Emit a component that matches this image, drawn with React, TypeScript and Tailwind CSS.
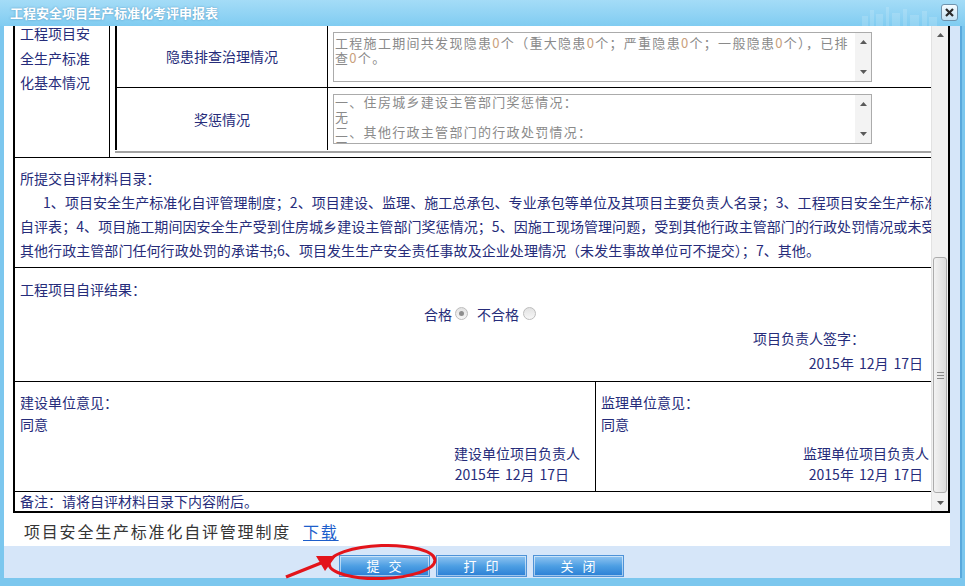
import React from 'react';

const Tri = ({ up }: { up?: boolean }) => (
  <svg width="7" height="4" viewBox="0 0 7 4">
    {up ? <path d="M0 4 L3.5 0 L7 4 Z" fill="#5a5a5a" /> : <path d="M0 0 L7 0 L3.5 4 Z" fill="#5a5a5a" />}
  </svg>
);

function Radio({ checked }: { checked?: boolean }) {
  return (
    <span className="w-[13px] h-[13px] rounded-full border border-[#bdbdbd] bg-gradient-to-b from-[#e2e2e2] to-[#f7f7f7] flex items-center justify-center">
      {checked && <span className="w-[5px] h-[5px] rounded-full bg-[#8e8e8e]" />}
    </span>
  );
}

function ReadBox({ children, top }: { children: React.ReactNode; top: string }) {
  return (
    <div className="w-[539px] h-[50px] border border-[#ababab] bg-white flex">
      <div className={`w-[521px] overflow-hidden whitespace-nowrap pl-[1px] ${top} text-[13px] tracking-[1.3px] leading-[15px] text-[#8a8a8a]`}>
        {children}
      </div>
      <div className="w-[16px] bg-[#f3f3f3] flex flex-col items-center justify-between py-[7px]">
        <Tri up />
        <Tri />
      </div>
    </div>
  );
}

const Zero = () => <span className="text-[#c9a07c]">0</span>;

const DateText = () => (
  <>
    2015年<span className="ml-[5px]">12月</span><span className="ml-[5px]">17日</span>
  </>
);

export default function App() {
  return (
    <div className="w-[965px] h-[586px] flex flex-col bg-[#7cc7ee] overflow-hidden font-['Noto_Sans_CJK_SC',sans-serif]">
      {/* title bar */}
      <div className="h-[26px] relative flex items-center bg-gradient-to-b from-[#a4dcf7] to-[#80ccf1]">
        <span className="pl-[10px] text-[13px] font-bold text-white [text-shadow:0_0_2px_rgba(30,90,140,0.5)]">工程安全项目生产标准化考评申报表</span>
        <svg className="absolute left-[862px] top-[4px]" width="75" height="22" viewBox="0 0 75 22">
          <g fill="#ffffff" opacity="0.15">
            <rect x="0" y="12" width="6" height="10" />
            <rect x="8" y="6" width="4" height="16" />
            <rect x="14" y="10" width="7" height="12" />
            <rect x="24" y="3" width="3" height="19" />
            <rect x="30" y="9" width="8" height="13" />
            <rect x="41" y="5" width="4" height="17" />
            <rect x="48" y="11" width="9" height="11" />
            <rect x="60" y="7" width="5" height="15" />
            <rect x="67" y="13" width="8" height="9" />
          </g>
        </svg>
        <button className="absolute left-[941px] top-[4px] w-[17px] h-[17px] rounded-[3px] border border-[#6f93ad] bg-gradient-to-b from-[#f4fbff] to-[#c4e2f4] flex items-center justify-center">
          <svg width="9" height="9" viewBox="0 0 9 9">
            <path d="M1 1 L8 8 M8 1 L1 8" stroke="#2a2a2a" strokeWidth="2.2" />
          </svg>
        </button>
      </div>

      <div className="h-[552px] flex">
        <div className="w-[4px]" />
        <div className="w-[954px] flex flex-col bg-[#d6e6f9]">
          {/* white area */}
          <div className="w-[946px] h-[520px] bg-white flex flex-col">
            <div className="ml-[9px] w-[937px] h-[487px] border-l-2 border-r-2 border-b-2 border-black flex">
              {/* scrolled content */}
              <div className="w-[916px] h-[485px] overflow-hidden">
                <div className="w-[930px] text-[14px] text-[#262c7a]">
                  {/* row 1 */}
                  <div className="h-[132px] border-b border-black flex">
                    <div className="w-[95px] border-r border-black pl-[5px]">
                      <div className="-mt-[5px] leading-[24.5px]">
                        <div>工程项目安</div>
                        <div>全生产标准</div>
                        <div>化基本情况</div>
                      </div>
                    </div>
                    <div className="flex-1 pl-[5px] flex flex-col">
                      <div className="border-l-2 border-black flex flex-col">
                        <div className="h-[62px] border-b border-black flex">
                          <div className="w-[211px] border-r border-black flex items-center justify-center">隐患排查治理情况</div>
                          <div className="pl-[5px] flex items-center">
                            <ReadBox top="pt-[2px]">
                              <div>工程施工期间共发现隐患<Zero />个（重大隐患<Zero />个；严重隐患<Zero />个；一般隐患<Zero />个），已排</div>
                              <div>查<Zero />个。</div>
                            </ReadBox>
                          </div>
                        </div>
                        <div className="h-[62px] flex">
                          <div className="w-[211px] border-r border-black flex items-center justify-center">奖惩情况</div>
                          <div className="pl-[5px] flex items-center">
                            <ReadBox top="-mt-[1px]">
                              <div>一、住房城乡建设主管部门奖惩情况：</div>
                              <div>无</div>
                              <div>二、其他行政主管部门的行政处罚情况：</div>
                              <div>无</div>
                            </ReadBox>
                          </div>
                        </div>
                      </div>
                      <div className="mt-[1px] h-[2px] bg-[#a3a3a3]" />
                    </div>
                  </div>

                  {/* row 2 */}
                  <div className="h-[110px] border-b border-black pt-[8px] pl-[5px] leading-[24px] whitespace-nowrap tracking-[0.06px]">
                    <div>所提交自评材料目录：</div>
                    <div className="pl-[23px]">1、项目安全生产标准化自评管理制度；2、项目建设、监理、施工总承包、专业承包等单位及其项目主要负责人名录；3、工程项目安全生产标准化</div>
                    <div>自评表；4、项目施工期间因安全生产受到住房城乡建设主管部门奖惩情况；5、因施工现场管理问题，受到其他行政主管部门的行政处罚情况或未受到</div>
                    <div>其他行政主管部门任何行政处罚的承诺书;6、项目发生生产安全责任事故及企业处理情况（未发生事故单位可不提交）；7、其他。</div>
                  </div>

                  {/* row 3 */}
                  <div className="h-[114px] border-b border-black pt-[9px] leading-[24.5px]">
                    <div className="pl-[5px]">工程项目自评结果：</div>
                    <div className="h-[24.5px] flex items-center justify-center">
                      <span>合格</span>
                      <span className="ml-[3px]"><Radio checked /></span>
                      <span className="ml-[9px]">不合格</span>
                      <span className="ml-[4px]"><Radio /></span>
                    </div>
                    <div className="text-right pr-[80px]">项目负责人签字：</div>
                    <div className="text-right pr-[22px]"><DateText /></div>
                  </div>

                  {/* row 4 */}
                  <div className="h-[110px] border-b border-black flex">
                    <div className="w-[580px] pt-[9px]">
                      <div className="pl-[5px] leading-[22px]">建设单位意见：</div>
                      <div className="pl-[5px] leading-[22px]">同意</div>
                      <div className="mt-[8px] text-right pr-[15px] leading-[21px]">建设单位项目负责人</div>
                      <div className="text-right pr-[26px] leading-[21px]"><DateText /></div>
                    </div>
                    <div className="flex-1 border-l border-black pt-[9px]">
                      <div className="pl-[5px] leading-[22px]">监理单位意见：</div>
                      <div className="pl-[5px] leading-[22px]">同意</div>
                      <div className="mt-[8px] text-right pr-[16px] leading-[21px]">监理单位项目负责人</div>
                      <div className="text-right pr-[22px] leading-[21px]"><DateText /></div>
                    </div>
                  </div>

                  {/* row 5 */}
                  <div className="h-[19px] pl-[5px] leading-[19px]">备注：请将自评材料目录下内容附后。</div>
                </div>
              </div>

              {/* scrollbar */}
              <div className="w-[17px] h-[485px] bg-[#f1f1f1] border-l border-[#e2e2e2] flex flex-col items-center">
                <div className="h-[17px] flex items-center justify-center"><Tri up /></div>
                <div className="mt-[214px] w-[14px] h-[236px] rounded-[3px] border border-[#acacac] bg-gradient-to-r from-[#f2f2f2] to-[#dcdcdc] flex flex-col items-center justify-center gap-[2px]">
                  <div className="w-[7px] h-[1px] bg-[#8a8a8a]" />
                  <div className="w-[7px] h-[1px] bg-[#8a8a8a]" />
                  <div className="w-[7px] h-[1px] bg-[#8a8a8a]" />
                </div>
                <div className="flex-1" />
                <div className="h-[17px] flex items-center justify-center"><Tri /></div>
              </div>
            </div>

            {/* attachment line */}
            <div className="pl-[20px] pt-[8px] leading-[20px] text-[16px] tracking-[1.8px] text-[#363636]">
              项目安全生产标准化自评管理制度
              <a className="ml-[12px] text-[#1d5ecb] underline underline-offset-2">下载</a>
            </div>
          </div>

          {/* button bar */}
          <div className="flex-1 pt-[9px] flex justify-center gap-[6px]">
            {['提交', '打印', '关闭'].map((t) => (
              <button
                key={t}
                className="w-[91px] h-[22px] border border-[#4f93d8] shadow-[inset_0_0_0_1px_rgba(255,255,255,0.55)] bg-gradient-to-b from-[#8fc4f1] via-[#4d9fe3] to-[#2a7fd5] text-white text-[13px] tracking-[9px] pl-[9px] leading-[20px]"
              >
                {t}
              </button>
            ))}
          </div>
        </div>
        <div className="w-[7px] flex">
          <div className="w-[2px] bg-[#d6e6f9]" />
          <div className="w-[2px] bg-[#5aa9dc]" />
          <div className="flex-1" />
        </div>
      </div>

      {/* annotation overlay */}
      <svg className="absolute left-0 top-0 pointer-events-none" width="965" height="586" viewBox="0 0 965 586">
        <ellipse cx="382" cy="562" rx="53" ry="16.5" fill="none" stroke="#e3141b" strokeWidth="3" transform="rotate(-2 382 562)" />
        <path d="M286 577 L321 563" stroke="#e3141b" strokeWidth="3.5" />
        <path d="M336 556 L316 556 L325 571 Z" fill="#e3141b" />
      </svg>
    </div>
  );
}
